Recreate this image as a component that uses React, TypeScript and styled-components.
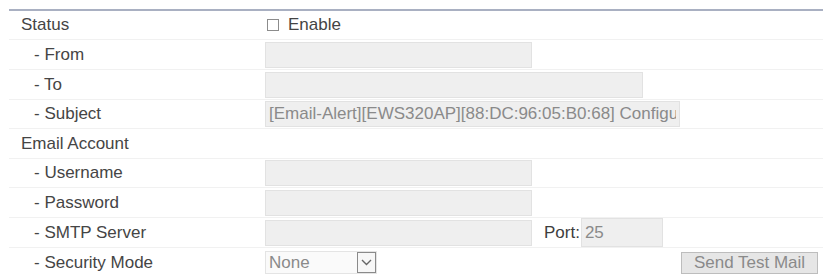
import styled, { createGlobalStyle } from 'styled-components'

const Global = createGlobalStyle`
  html, body {
    margin: 0;
    padding: 0;
    background: #ffffff;
  }
  body {
    font-family: 'Liberation Sans', Arial, sans-serif;
    font-size: 17px;
    color: #444;
  }
`

const Page = styled.div`
  width: 823px;
  height: 276px;
  overflow: hidden;
  padding-left: 9px;
  box-sizing: border-box;
`

const TopRule = styled.div`
  margin-top: 9px;
  height: 2px;
  background: #a9b0c2;
`

const Row = styled.div<{ h: number }>`
  display: grid;
  grid-template-columns: 256px 1fr;
  align-items: center;
  height: ${({ h }) => h}px;
  border-bottom: 1px solid #f1f1f1;
  box-sizing: border-box;
`

const Label = styled.div<{ sub?: boolean }>`
  padding-left: ${({ sub }) => (sub ? 25 : 12)}px;
  color: #454545;
  white-space: nowrap;
`

const Cell = styled.div`
  display: flex;
  align-items: center;
  padding-right: 5px;
`

const Field = styled.input<{ w: number; hgt?: number }>`
  width: ${({ w }) => w}px;
  height: ${({ hgt }) => hgt ?? 26}px;
  box-sizing: border-box;
  background: #efefef;
  border: 1px solid #e2e2e2;
  padding: 0 3px;
  font-family: 'Liberation Sans', Arial, sans-serif;
  font-size: 17px;
  color: #8a8a8a;
  outline: none;
`

const Check = styled.span`
  width: 12px;
  height: 12px;
  margin-left: 2px;
  border: 1px solid #8c8c8c;
  background: #fff;
  box-sizing: border-box;
`

const CheckText = styled.span`
  margin-left: 9px;
  color: #444;
`

const PortLabel = styled.span`
  margin: 0 1px 0 12px;
  color: #3e3e3e;
`

const Select = styled.div`
  width: 112px;
  height: 23px;
  box-sizing: border-box;
  border: 1px solid #e4e4e4;
  background: #fafafa;
  display: flex;
  align-items: center;
  justify-content: space-between;
  padding-left: 3px;
  color: #8a8a8a;
`

const Arrow = styled.span`
  width: 19px;
  height: 21px;
  box-sizing: border-box;
  border: 1px solid #8a8a8a;
  background: #f7f7f7;
  display: flex;
  align-items: center;
  justify-content: center;
`

const Spacer = styled.div`
  flex: 1;
`

const Button = styled.button`
  width: 137px;
  height: 22px;
  box-sizing: border-box;
  background: #e6e6e6;
  border: 1px solid #bdbdbd;
  font-family: 'Liberation Sans', Arial, sans-serif;
  font-size: 17px;
  color: #8a8a8a;
  padding: 0;
`

export default function App() {
  return (
    <Page>
      <Global />
      <TopRule />
      <Row h={29}>
        <Label>Status</Label>
        <Cell>
          <Check />
          <CheckText>Enable</CheckText>
        </Cell>
      </Row>
      <Row h={30}>
        <Label sub>- From</Label>
        <Cell>
          <Field w={267} readOnly value="" />
        </Cell>
      </Row>
      <Row h={30}>
        <Label sub>- To</Label>
        <Cell>
          <Field w={378} readOnly value="" />
        </Cell>
      </Row>
      <Row h={29}>
        <Label sub>- Subject</Label>
        <Cell>
          <Field w={415} readOnly value="[Email-Alert][EWS320AP][88:DC:96:05:B0:68] Configuration changed" />
        </Cell>
      </Row>
      <Row h={30}>
        <Label>Email Account</Label>
        <Cell />
      </Row>
      <Row h={29}>
        <Label sub>- Username</Label>
        <Cell>
          <Field w={267} readOnly value="" />
        </Cell>
      </Row>
      <Row h={30}>
        <Label sub>- Password</Label>
        <Cell>
          <Field w={267} readOnly value="" />
        </Cell>
      </Row>
      <Row h={30}>
        <Label sub>- SMTP Server</Label>
        <Cell>
          <Field w={267} readOnly value="" />
          <PortLabel>Port:</PortLabel>
          <Field w={82} hgt={29} readOnly value="25" />
        </Cell>
      </Row>
      <Row h={30}>
        <Label sub>- Security Mode</Label>
        <Cell>
          <Select>
            None
            <Arrow>
              <svg width="11" height="7" viewBox="0 0 11 7">
                <path d="M1 1 L5.5 5.5 L10 1" fill="none" stroke="#666" strokeWidth="1.4" />
              </svg>
            </Arrow>
          </Select>
          <Spacer />
          <Button disabled>Send Test Mail</Button>
        </Cell>
      </Row>
    </Page>
  )
}
